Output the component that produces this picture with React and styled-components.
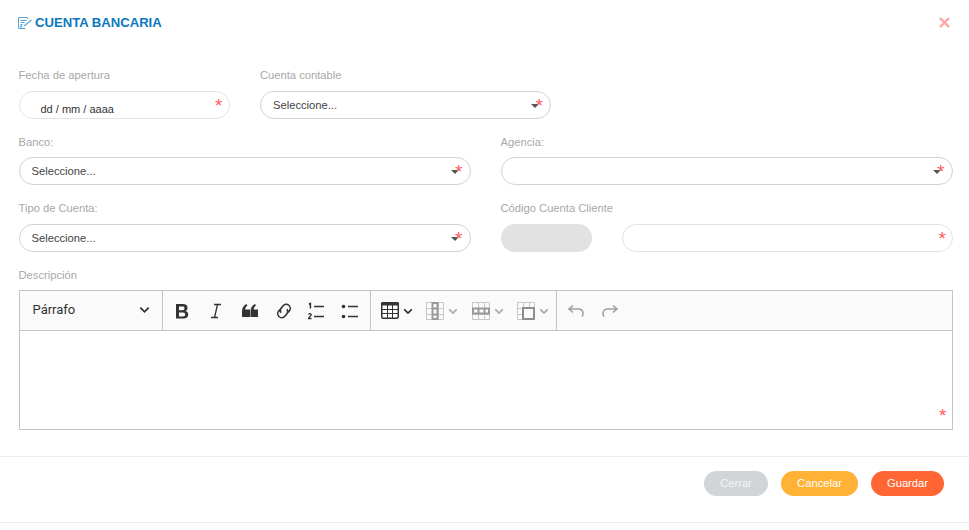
import React from "react";
import styled, { createGlobalStyle } from "styled-components";

const Global = createGlobalStyle`
  html, body { margin: 0; padding: 0; background: #fff; }
  body { font-family: "Liberation Sans", Arial, sans-serif; }
`;

const Modal = styled.div`
  width: 969px;
  height: 530px;
  box-sizing: border-box;
  overflow: hidden;
`;
const Header = styled.header`
  height: 52px;
  box-sizing: border-box;
  padding: 14px 18px 0 18px;
  display: flex;
  align-items: flex-start;
  justify-content: space-between;
`;
const Title = styled.h1`
  margin: 0;
  display: flex;
  align-items: center;
  gap: 3px;
  height: 17px;
  font-size: 13.12px;
  font-weight: 700;
  color: #0a78bd;
  line-height: 17px;
`;
const Close = styled.span`
  width: 14px;
  height: 17px;
  display: flex;
  align-items: center;
  justify-content: center;
`;
const Form = styled.div`
  padding: 0 16px 0 18.5px;
  display: flex;
  flex-direction: column;
`;
const Row = styled.div`
  display: flex;
  height: ${(p) => p.$h}px;
  gap: 30px;
`;
const Field = styled.div`
  width: ${(p) => p.$w}px;
  flex: none;
  display: flex;
  flex-direction: column;
`;
const Label = styled.label`
  font-size: 11.2px;
  line-height: 13px;
  color: #a8a8a8;
  height: 13px;
  margin-top: ${(p) => p.$mt}px;
  margin-bottom: ${(p) => p.$mb}px;
`;
const InputBox = styled.div`
  position: relative;
  height: 28px;
  box-sizing: border-box;
  border: 1px solid ${(p) => (p.$soft ? "#e3e3e3" : "#ced4da")};
  border-radius: 14px;
  background: #fff;
  display: flex;
  align-items: center;
  padding-left: 12px;
  font-size: 11.2px;
  color: #444;
`;
const DateText = styled.span`
  padding-left: 9px;
  padding-top: 7px;
  font-size: 11px;
  color: #333;
`;
const Star = styled.span`
  position: absolute;
  right: ${(p) => p.$r}px;
  top: ${(p) => p.$t || 3}px;
  font-family: "Liberation Sans", sans-serif;
  font-size: 19px;
  line-height: 22px;
  color: #ff5a5f;
`;
const Caret = styled.span`
  position: absolute;
  right: 11px;
  top: 12px;
  width: 0;
  height: 0;
  border-left: 4px solid transparent;
  border-right: 4px solid transparent;
  border-top: 4px solid #555;
`;
const CodeRow = styled.div`
  display: flex;
  gap: 30px;
`;
const GreyBox = styled.div`
  width: 91px;
  height: 28px;
  border-radius: 14px;
  background: #e2e2e2;
  flex: none;
`;
const Grow = styled.div`
  flex: 1;
`;
const Editor = styled.div`
  position: relative;
  width: 934px;
  height: 140px;
  box-sizing: border-box;
  border: 1px solid #c4c4c4;
`;
const Toolbar = styled.div`
  height: 40px;
  box-sizing: border-box;
  border-bottom: 1px solid #c4c4c4;
  background: #fafafa;
  display: flex;
  align-items: stretch;
`;
const ToolGroup = styled.div`
  display: flex;
  align-items: center;
  border-right: ${(p) => (p.$last ? "none" : "1px solid #c4c4c4")};
  width: ${(p) => p.$w}px;
  padding-left: ${(p) => p.$pl || 0}px;
  box-sizing: border-box;
  flex: none;
`;
const Paragraph = styled.div`
  font-family: Roboto, sans-serif;
  font-size: 13px;
  color: #333;
  width: 100%;
  padding: 0 12px 2px 13px;
  display: flex;
  justify-content: space-between;
  align-items: center;
`;
const ToolBtn = styled.span`
  width: ${(p) => p.$w || 34}px;
  height: 34px;
  display: flex;
  align-items: center;
  flex: none;
  justify-content: ${(p) => (p.$left ? "flex-start" : "center")};
  gap: 4px;
`;
const Footer = styled.footer`
  margin-top: 26px;
  height: 67px;
  box-sizing: border-box;
  border-top: 1px solid #eceeef;
  border-bottom: 1px solid #eceeef;
  display: flex;
  justify-content: flex-end;
  align-items: flex-start;
  padding: 14px 25px 0 0;
  gap: 13px;
`;
const Btn = styled.button`
  height: 25px;
  width: ${(p) => p.$w}px;
  border: none;
  border-radius: 13px;
  background: ${(p) => p.$bg};
  color: ${(p) => p.$fg || "#fff"};
  font-family: "Liberation Sans", sans-serif;
  font-size: 11.2px;
  padding: 0 0 2px;
`;

const Chevron = ({ color = "#333", size = 10 }) => (
  <svg width={size} height={size} viewBox="0 0 12 12" fill="none" stroke={color} strokeWidth="2">
    <path d="M1.500 4 L6 8.500 L10.500 4" />
  </svg>
);

const Grid = ({ children, stroke = "#c8c8c8" }) => (
  <svg width="18" height="18" viewBox="0 0 18 18" fill="none" stroke={stroke} strokeWidth="1">
    <path d="M.5.5h17v17H.5zM.5 6.500h17M.5 12.500h17M6.500.5v17M12.500.5v17" />
    {children}
  </svg>
);

const Req = ({ r = 6.5, t }) => <Star $r={r} $t={t}>*</Star>;

export default function App() {
  return (
    <Modal>
      <Global />
      <Header>
        <Title>
          <svg width="14" height="12" viewBox="0 0 14 12" fill="none" stroke="#5aa6d8" strokeWidth="1">
            <path d="M.5.5h9v1.500M.5.5v11h7M2.500 3.500h6M2.500 5.500h4M2.500 7.500h2" />
            <path d="M6 9 13.500 3" strokeWidth="1.300" />
            <rect x="2" y="8.500" width="2" height="2" fill="#5aa6d8" stroke="none" />
          </svg>
          CUENTA BANCARIA
        </Title>
        <Close>
          <svg width="11" height="11" viewBox="0 0 11 11" stroke="#ffa3a3" strokeWidth="2.400" fill="none">
            <path d="M1 1 10 10M10 1 1 10" />
          </svg>
        </Close>
      </Header>
      <Form>
        <Row $h="74">
          <Field $w={211.5}>
            <Label $mt="17" $mb="9">Fecha de apertura</Label>
            <InputBox $soft>
              <DateText>dd / mm / aaaa</DateText>
              <Req />
            </InputBox>
          </Field>
          <Field $w={291}>
            <Label $mt="17" $mb="9">Cuenta contable</Label>
            <InputBox>
              Seleccione...
              <Caret />
              <Req r={7} />
            </InputBox>
          </Field>
        </Row>
        <Row $h="66">
          <Field $w={452}>
            <Label $mt="10" $mb="8">Banco:</Label>
            <InputBox>
              Seleccione...
              <Caret />
              <Req r={7} />
            </InputBox>
          </Field>
          <Field $w={452}>
            <Label $mt="10" $mb="8">Agencia:</Label>
            <InputBox>
              <Caret />
              <Req r={7} />
            </InputBox>
          </Field>
        </Row>
        <Row $h="66">
          <Field $w={452}>
            <Label $mt="10" $mb="9">Tipo de Cuenta:</Label>
            <InputBox>
              Seleccione...
              <Caret />
              <Req r={7} />
            </InputBox>
          </Field>
          <Field $w={452}>
            <Label $mt="10" $mb="9">Código Cuenta Cliente</Label>
            <CodeRow>
              <GreyBox />
              <Grow>
                <InputBox $soft>
                  <Req r={5.5} />
                </InputBox>
              </Grow>
            </CodeRow>
          </Field>
        </Row>
        <Label $mt="11" $mb="8">Descripción</Label>
        <Editor>
          <Toolbar>
            <ToolGroup $w={143}>
              <Paragraph>
                Párrafo
                <Chevron size={11} />
              </Paragraph>
            </ToolGroup>
            <ToolGroup $w={208} $pl={2}>
              <ToolBtn>
                <svg width="20" height="20" viewBox="0 0 20 20" fill="#333">
                  <path d="M4 3h7c3 0 4.500 1.600 4.500 3.900 0 1.500-.8 2.500-2 3 1.700.5 2.700 1.700 2.700 3.500 0 2.600-1.800 4.100-4.700 4.100H4zM7 5.500v3.700h3.500c1.300 0 2-.7 2-1.900 0-1.200-.7-1.800-2-1.800zM7 11.500v4h4c1.400 0 2.200-.7 2.200-2s-.8-2-2.200-2z" />
                </svg>
              </ToolBtn>
              <ToolBtn>
                <svg width="20" height="20" viewBox="0 0 20 20" fill="none" stroke="#333" strokeWidth="1.300">
                  <path d="M8 3.500h7M5 16.500h7M11.500 3.500 8.500 16.500" />
                </svg>
              </ToolBtn>
              <ToolBtn>
                <svg width="20" height="20" viewBox="0 0 20 20" fill="#333">
                  <path d="M2 10.500c0-3.500 1.500-6 4.500-7.500l1 1.500C6 5.500 5.300 6.700 5.200 8.500H10V16H2zM10.500 10.500c0-3.500 1.500-6 4.500-7.500l1 1.500c-1.500 1-2.200 2.200-2.300 4H18V16h-7.500z" />
                </svg>
              </ToolBtn>
              <ToolBtn>
                <svg width="20" height="20" viewBox="0 0 20 20" fill="none" stroke="#333" strokeWidth="1.600">
                  <g transform="rotate(-50 10 10)">
                    <path d="M8.500 6H6.500a4 4 0 0 0 0 8h3a4 4 0 0 0 3.800-2.800M11.500 14h2a4 4 0 0 0 0-8h-3a4 4 0 0 0-3.800 2.800" />
                  </g>
                </svg>
              </ToolBtn>
              <ToolBtn>
                <svg width="20" height="20" viewBox="0 0 20 20" fill="none" stroke="#333" transform="translate(-2 0)">
                  <path d="M8 5.500h10M8 15.500h10" strokeWidth="1.500" />
                  <path d="M2.800 3.200 4.400 2.500v5" strokeWidth="1.500" />
                  <path d="M2.600 13.500c.5-1.200 2.800-1 2.600.5-.1 1-2.600 1.800-2.600 3.500h2.900" strokeWidth="1.300" />
                </svg>
              </ToolBtn>
              <ToolBtn>
                <svg width="20" height="20" viewBox="0 0 20 20" fill="#333" stroke="#333" transform="translate(-2 0)">
                  <path d="M8 5.500h10M8 15.500h10" strokeWidth="1.500" />
                  <circle cx="3.500" cy="5.500" r="1.800" stroke="none" />
                  <circle cx="3.500" cy="15.500" r="1.800" stroke="none" />
                </svg>
              </ToolBtn>
            </ToolGroup>
            <ToolGroup $w={186} $pl={10}>
              <ToolBtn $w={45} $left>
                <svg width="18" height="17" viewBox="0 0 18 17" fill="none">
                  <rect x=".75" y=".75" width="16.500" height="15.500" rx="1.500" fill="#fff" stroke="#333" strokeWidth="1.500" />
                  <rect x="0" y="0" width="18" height="3.500" rx="1.500" fill="#333" />
                  <path d="M1 7.500h16M1 11.500h16M6.500 3v13M11.500 3v13" stroke="#333" />
                </svg>
                <Chevron />
              </ToolBtn>
              <ToolBtn $w={46} $left>
                <Grid>
                  <path d="M6.500 1h5v16h-5zM6.500 6.500h5M6.500 12.500h5" stroke="#999" strokeWidth="2" />
                </Grid>
                <Chevron color="#aaa" />
              </ToolBtn>
              <ToolBtn $w={45} $left>
                <Grid>
                  <path d="M1 6.500h16v5H1zM6.500 6.500v5M12.500 6.500v5" stroke="#999" strokeWidth="2" />
                </Grid>
                <Chevron color="#aaa" />
              </ToolBtn>
              <ToolBtn $w={40} $left>
                <Grid>
                  <path d="M6 6h11v11H6z" stroke="#8e8e8e" strokeWidth="2" fill="#fafafa" />
                </Grid>
                <Chevron color="#aaa" />
              </ToolBtn>
            </ToolGroup>
            <ToolGroup $last $w={120} $pl={2}>
              <ToolBtn>
                <svg width="20" height="20" viewBox="0 0 20 20" fill="none" stroke="#a0a0a0" strokeWidth="1.600">
                  <path d="M7 4.500 3 8l4 3.500M3 8h9c3 0 5 1.800 5 4.500 0 1-.3 2-1 3" />
                </svg>
              </ToolBtn>
              <ToolBtn>
                <svg width="20" height="20" viewBox="0 0 20 20" fill="none" stroke="#a0a0a0" strokeWidth="1.600">
                  <path d="M13 4.500 17 8l-4 3.500M17 8H8c-3 0-5 1.800-5 4.500 0 1 .3 2 1 3" />
                </svg>
              </ToolBtn>
            </ToolGroup>
          </Toolbar>
          <Req r={5} t={114} />
        </Editor>
      </Form>
      <Footer>
        <Btn $w={64} $bg="#d1d5d8" $fg="#f3f4f5">Cerrar</Btn>
        <Btn $w={77} $bg="#ffb236">Cancelar</Btn>
        <Btn $w={73} $bg="#ff6633">Guardar</Btn>
      </Footer>
    </Modal>
  );
}
